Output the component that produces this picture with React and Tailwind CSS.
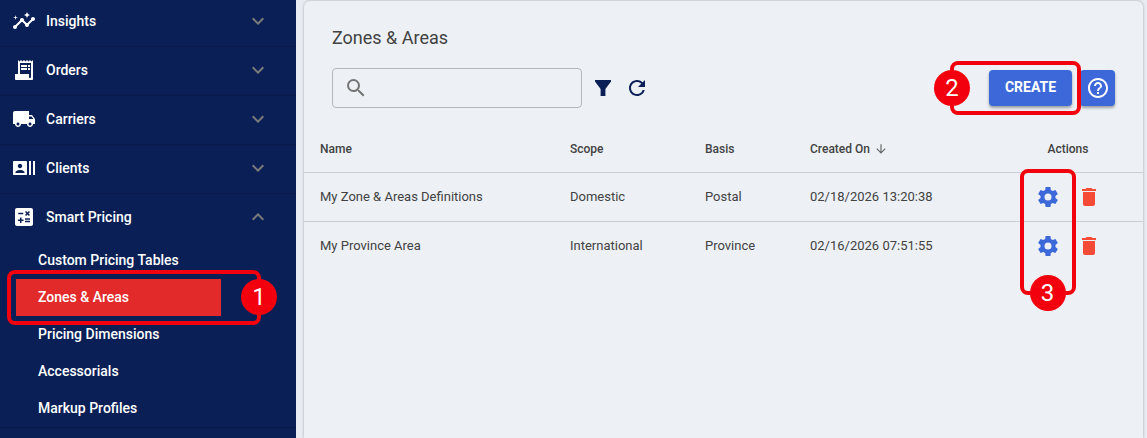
import React from "react";
import {
  MdArrowDownward,
  MdCalculate,
  MdDelete,
  MdExpandLess,
  MdExpandMore,
  MdHelpOutline,
  MdInsights,
  MdLocalShipping,
  MdRecentActors,
  MdRefresh,
  MdSearch,
} from "react-icons/md";

const ReceiptIcon = ({ className }) => (
  <svg viewBox="0 0 24 24" className={className} fill="currentColor" aria-hidden="true">
    <path
      fillRule="evenodd"
      d="M19.5 3.5 18 2l-1.5 1.5L15 2l-1.5 1.5L12 2l-1.5 1.5L9 2 7.5 3.5 6 2v14H3v5c0 .55.45 1 1 1h16c.55 0 1-.45 1-1V2zM19 19c0 .55-.45 1-1 1s-1-.45-1-1v-3H8V5h11z"
    />
    <path d="M9 7h6v2H9zM16 7h2v2h-2zM9 10h6v2H9zM16 10h2v2h-2z" />
  </svg>
);

const FilterIcon = () => (
  <svg viewBox="0 0 24 24" className="size-6" fill="currentColor" aria-hidden="true">
    <path d="M4 4h16v1.6L14.4 13v7H9.6v-7L4 5.6z" />
  </svg>
);

const GearIcon = () => (
  <svg viewBox="0 0 24 24" className="size-6" fill="currentColor" aria-hidden="true">
    <path
      fillRule="evenodd"
      d="M19.43 12.98c.05-.32.07-.65.07-.98s-.02-.66-.07-.98l2.44-1.92-2.43-4.2-2.88 1.15c-.52-.4-1.08-.73-1.7-.98L14.43 2H9.57l-.43 3.07c-.62.25-1.19.58-1.7.98L4.56 4.9 2.13 9.1l2.44 1.92c-.05.32-.07.65-.07.98s.02.66.07.98L2.13 14.9l2.43 4.2 2.88-1.15c.52.4 1.08.73 1.7.98L9.57 22h4.86l.43-3.07c.62-.25 1.19-.58 1.7-.98l2.88 1.15 2.43-4.2zM12 15.5a3.5 3.5 0 1 1 0-7 3.5 3.5 0 0 1 0 7z"
    />
  </svg>
);

const menu = [
  { label: "Insights", icon: MdInsights },
  { label: "Orders", icon: ReceiptIcon },
  { label: "Carriers", icon: MdLocalShipping },
  { label: "Clients", icon: MdRecentActors },
  {
    label: "Smart Pricing",
    icon: MdCalculate,
    children: [
      { label: "Custom Pricing Tables" },
      { label: "Zones & Areas", active: true },
      { label: "Pricing Dimensions" },
      { label: "Accessorials" },
      { label: "Markup Profiles" },
    ],
  },
];

const zones = [
  { name: "My Zone & Areas Definitions", scope: "Domestic", basis: "Postal", created: "02/18/2026 13:20:38" },
  { name: "My Province Area", scope: "International", basis: "Province", created: "02/16/2026 07:51:55" },
];

// Red outline with a numbered badge, laid over the element it points at
const Callout = ({ number, box, badge }) => (
  <span className={`pointer-events-none absolute z-10 rounded-lg border-4 border-[#f2000d] ${box}`}>
    <span
      className={`absolute flex size-9 items-center justify-center rounded-full bg-[#f2000d] text-2xl font-normal text-white ${badge}`}
    >
      {number}
    </span>
  </span>
);

const Sidebar = () => (
  <nav className="w-[296px] shrink-0 bg-[#0a1f56] text-sm font-medium text-white">
    <ul className="-mt-0.5">
      {menu.map(({ label, icon: Icon, children }) => (
        <li key={label} className="border-b border-[#091a4a]">
          <button
            type="button"
            className="flex h-12 w-full items-center pr-[26px] pb-0.5 pl-3"
            aria-expanded={!!children}
          >
            <Icon className="size-6" />
            <span className="ml-2.5">{label}</span>
            {children ? (
              <MdExpandLess className="ml-auto size-6 text-[#7b7b7b]" />
            ) : (
              <MdExpandMore className="ml-auto size-6 text-[#7b7b7b]" />
            )}
          </button>
          {children && (
            <ul className="pr-[75px] pl-4">
              {children.map((item) => (
                <li key={item.label} className="relative">
                  <a
                    href="#"
                    className={`flex h-[37px] items-center pb-0.5 pl-[22px] ${item.active ? "bg-[#e32a2a]" : ""}`}
                  >
                    {item.label}
                  </a>
                  {item.active && (
                    <Callout number={1} box="-inset-y-[9px] -left-[9px] -right-10" badge="top-[5px] -right-5" />
                  )}
                </li>
              ))}
            </ul>
          )}
        </li>
      ))}
    </ul>
  </nav>
);

const Toolbar = () => (
  <div className="mt-4 flex items-center px-7">
    <label className="flex h-10 w-[250px] items-center rounded border border-[#b4b7bd] px-[11px]">
      <MdSearch className="size-6 shrink-0 text-[#757575]" />
      <input type="text" aria-label="Search" className="ml-2 w-full bg-transparent text-sm outline-none" />
    </label>
    <button type="button" aria-label="Filter" className="ml-[9px] text-[#0a1f56]">
      <FilterIcon />
    </button>
    <button type="button" aria-label="Refresh" className="ml-2.5 text-[#0a1f56]">
      <MdRefresh className="size-6" />
    </button>
    <div className="ml-auto flex gap-2">
      <div className="relative">
        <button
          type="button"
          className="h-9 w-[83px] rounded bg-[#3c68d9] pb-0.5 text-sm font-bold text-white shadow-[0_2px_3px_rgba(0,0,0,0.35)]"
        >
          CREATE
        </button>
        <Callout number={2} box="-inset-y-[9px] -left-[39px] -right-[9px]" badge="top-[5px] -left-5" />
      </div>
      <button
        type="button"
        aria-label="Help"
        className="flex h-9 w-[35px] items-center justify-center rounded bg-[#3c68d9] text-white shadow-[0_2px_3px_rgba(0,0,0,0.35)]"
      >
        <MdHelpOutline className="size-6" />
      </button>
    </div>
  </div>
);

const ZonesTable = () => (
  <table className="mt-4 w-full table-fixed border-collapse text-left text-[13px]">
    <thead>
      <tr className="h-12 border-b border-[#cbcfd5] text-xs">
        <th className="w-[250px] px-4 pt-0.5 font-medium">Name</th>
        <th className="w-[135px] px-4 pt-0.5 font-medium">Scope</th>
        <th className="w-[105px] px-4 pt-0.5 font-medium">Basis</th>
        <th className="px-4 pt-0.5 font-medium">
          <span className="flex items-center gap-1">
            Created On
            <MdArrowDownward className="size-3.5 text-[#666]" />
          </span>
        </th>
        <th className="w-[150px] pt-0.5 text-center font-medium">Actions</th>
      </tr>
    </thead>
    <tbody>
      {zones.map((zone, index) => (
        <tr key={zone.name} className="h-[49px] border-b border-[#cbcfd5] last:border-b-0">
          <td className="px-4">{zone.name}</td>
          <td className="px-4">{zone.scope}</td>
          <td className="px-4">{zone.basis}</td>
          <td className="px-4">{zone.created}</td>
          <td>
            <div className="flex items-center justify-center gap-[17px]">
              <div className="relative">
                <button type="button" aria-label="Edit zone" className="block text-[#3c68d9]">
                  <GearIcon />
                </button>
                {index === 0 && (
                  <Callout number={3} box="-inset-x-4 -top-4 h-[126px]" badge="-bottom-5 left-1.5" />
                )}
              </div>
              <button type="button" aria-label="Delete zone" className="text-[#f44a36]">
                <MdDelete className="size-6" />
              </button>
            </div>
          </td>
        </tr>
      ))}
    </tbody>
  </table>
);

const App = () => {
  return (
    <div className="flex h-screen overflow-hidden bg-[#e9ecf2] font-[Roboto,sans-serif] text-[#424242]">
      <Sidebar />
      <main className="flex min-w-0 flex-1 pt-px pr-1 pl-2">
        <section className="min-w-0 flex-1 rounded-t-md bg-[#edf1f6] pt-[23px] shadow-[0_0_3px_rgba(0,0,0,0.3)]">
          <h1 className="px-7 text-lg">Zones &amp; Areas</h1>
          <Toolbar />
          <ZonesTable />
        </section>
      </main>
    </div>
  );
};

export default App;
